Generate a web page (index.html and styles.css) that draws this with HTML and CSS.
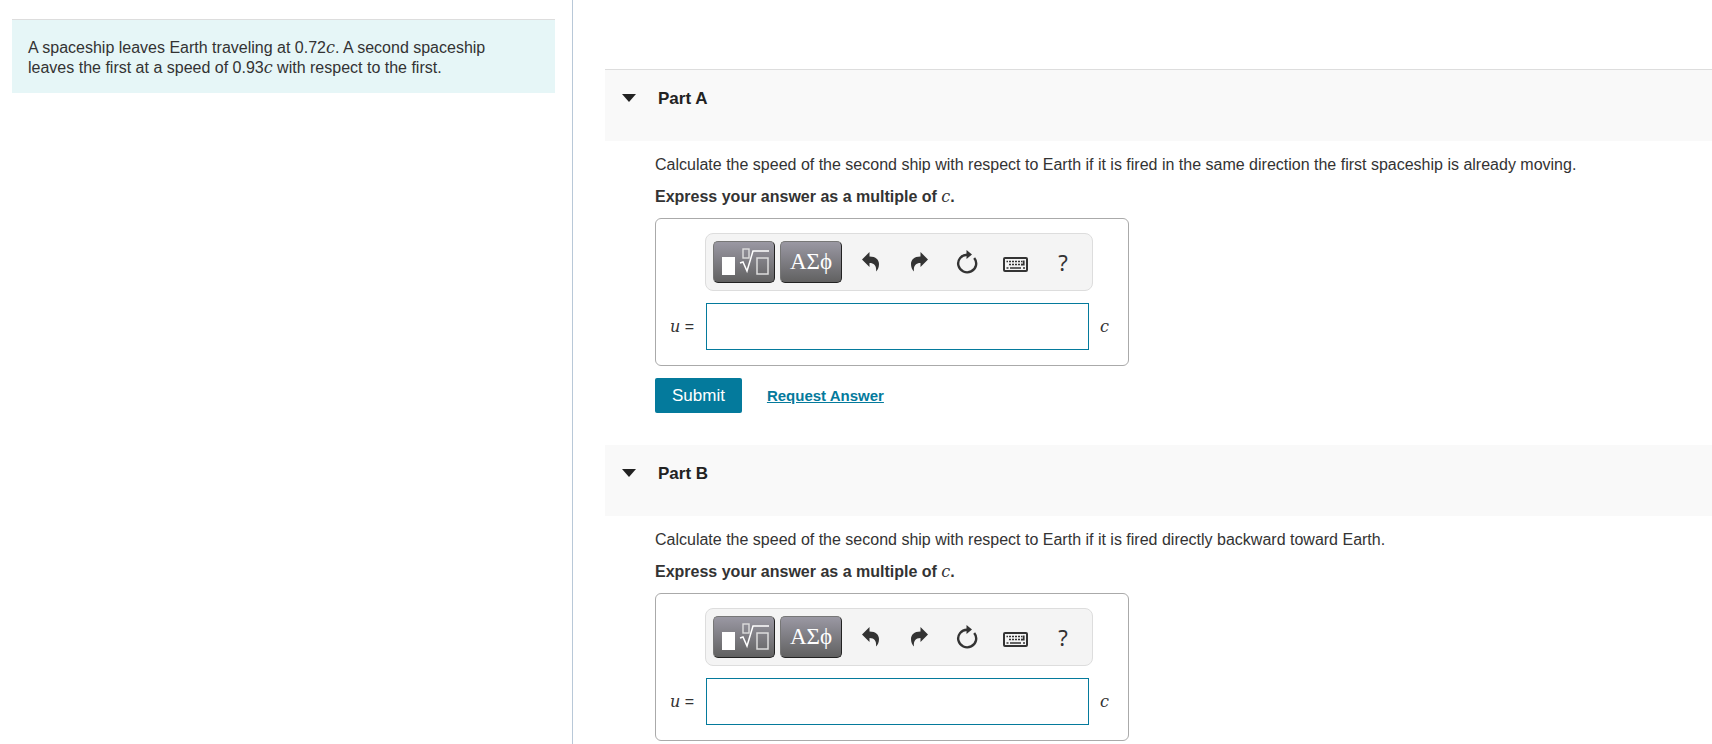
FILE: index.html
```
<!DOCTYPE html>
<html lang="en">
<head>
  <meta charset="UTF-8">
  <meta name="viewport" content="width=device-width, initial-scale=1.0">
  <title>Spaceship speeds</title>
  <link rel="stylesheet" href="styles.css">
</head>
<body>

  <!-- shared icons -->
  <svg class="icon-defs" width="0" height="0" aria-hidden="true">
    <symbol id="icon-template" viewBox="-4 0 52 28">
      <rect x="0" y="9" width="13" height="18" fill="#fff"/>
      <rect x="21" y="1" width="6" height="9" fill="none" stroke="#ddd" stroke-width="1.4"/>
      <path d="M18 15l3-1 4 9 6-20h16" fill="none" stroke="#fff" stroke-width="1.5"/>
      <rect x="35" y="10" width="11" height="16" fill="none" stroke="#ddd" stroke-width="1.5"/>
    </symbol>
    <symbol id="icon-undo" viewBox="0 0 20 20">
      <path d="M1 7.500L8.500 0V4.500C15 4.500 18 8 18 12C18 15 17 17.500 15 19.500C15.700 14 13.500 11 8.500 11V15Z" fill="#333"/>
    </symbol>
    <symbol id="icon-reset" viewBox="0 0 22 24">
      <path d="M18.200 8A9 8.800 0 1 1 11 4.700" fill="none" stroke="#333" stroke-width="2.400"/>
      <path d="M10.500 0l5.500 4.500-5.500 4.500z" fill="#333"/>
    </symbol>
    <symbol id="icon-keyboard" viewBox="0 0 25 15">
      <rect x="1" y="1" width="23" height="13" rx="1" fill="none" stroke="#333" stroke-width="2"/>
      <path d="M3.500 4.500h16M5 7.500h14M3.500 11h2M7 11h11M20 11h2" fill="none" stroke="#333" stroke-width="1.600"/>
      <path d="M5.500 3v5.800M8.500 3v5.800M11.500 3v5.800M14.500 3v5.800M17.500 3v5.800" stroke="#f4f4f4" stroke-width="1"/>
      <path d="M20.700 3.500v4.200h-2.500" fill="none" stroke="#333" stroke-width="1.800"/>
    </symbol>
  </svg>

  <div class="page">
    <aside class="problem">
      <p class="problem-text">A spaceship leaves Earth traveling at 0.72<i class="math">c</i>. A second spaceship leaves the first at a speed of 0.93<i class="math">c</i> with respect to the first.</p>
    </aside>

    <main class="parts">
      <section class="part">
        <header class="part-header">
          <button type="button" class="toggle" aria-label="Collapse Part A"></button>
          <h2>Part A</h2>
        </header>
        <form class="part-body">
          <p>Calculate the speed of the second ship with respect to Earth if it is fired in the same direction the first spaceship is already moving.</p>
          <p class="instructions">Express your answer as a multiple of <i class="math">c</i>.</p>
          <div class="answer-box">
            <div class="toolbar">
              <button type="button" class="palette-btn" aria-label="Templates"><svg width="52" height="28"><use href="#icon-template"/></svg></button>
              <button type="button" class="palette-btn">ΑΣϕ</button>
              <div class="tools">
                <button type="button" class="tool-btn" aria-label="Undo"><svg width="20" height="20"><use href="#icon-undo"/></svg></button>
                <button type="button" class="tool-btn" aria-label="Redo"><svg class="flip" width="20" height="20"><use href="#icon-undo"/></svg></button>
                <button type="button" class="tool-btn" aria-label="Reset"><svg width="22" height="24"><use href="#icon-reset"/></svg></button>
                <button type="button" class="tool-btn tool-keyboard" aria-label="Keyboard shortcuts"><svg width="25" height="15"><use href="#icon-keyboard"/></svg></button>
                <button type="button" class="tool-btn">?</button>
              </div>
            </div>
            <div class="answer-row">
              <label for="answer-a"><i class="math">u</i> =</label>
              <input type="text" id="answer-a" name="answer-a" autocomplete="off">
              <i class="math unit">c</i>
            </div>
          </div>
          <div class="actions">
            <button type="submit" class="btn-submit">Submit</button>
            <a href="#answer">Request Answer</a>
          </div>
        </form>
      </section>

      <section class="part">
        <header class="part-header">
          <button type="button" class="toggle" aria-label="Collapse Part B"></button>
          <h2>Part B</h2>
        </header>
        <form class="part-body">
          <p>Calculate the speed of the second ship with respect to Earth if it is fired directly backward toward Earth.</p>
          <p class="instructions">Express your answer as a multiple of <i class="math">c</i>.</p>
          <div class="answer-box">
            <div class="toolbar">
              <button type="button" class="palette-btn" aria-label="Templates"><svg width="52" height="28"><use href="#icon-template"/></svg></button>
              <button type="button" class="palette-btn">ΑΣϕ</button>
              <div class="tools">
                <button type="button" class="tool-btn" aria-label="Undo"><svg width="20" height="20"><use href="#icon-undo"/></svg></button>
                <button type="button" class="tool-btn" aria-label="Redo"><svg class="flip" width="20" height="20"><use href="#icon-undo"/></svg></button>
                <button type="button" class="tool-btn" aria-label="Reset"><svg width="22" height="24"><use href="#icon-reset"/></svg></button>
                <button type="button" class="tool-btn tool-keyboard" aria-label="Keyboard shortcuts"><svg width="25" height="15"><use href="#icon-keyboard"/></svg></button>
                <button type="button" class="tool-btn">?</button>
              </div>
            </div>
            <div class="answer-row">
              <label for="answer-b"><i class="math">u</i> =</label>
              <input type="text" id="answer-b" name="answer-b" autocomplete="off">
              <i class="math unit">c</i>
            </div>
          </div>
        </form>
      </section>
    </main>
  </div>

</body>
</html>
```

FILE: styles.css
```
* {
  box-sizing: border-box;
}

body {
  margin: 0;
  font-family: 'Liberation Sans', Arial, sans-serif;
  font-size: 16px;
  line-height: 20px;
  color: #333;
  background: #fff;
}

p,
h2 {
  margin: 0;
}

button {
  padding: 0;
  border: none;
  background: none;
  font-family: inherit;
  color: inherit;
  cursor: pointer;
}

.icon-defs {
  display: none;
}

.page {
  display: grid;
  grid-template-columns: 33.47% 1fr;
  min-height: 100vh;
}

.problem {
  padding: 19px 17px 0 12px;
  border-right: 1px solid #b8c8d8;
}

.problem-text {
  padding: 18px 40px 15px 16px;
  border-top: 1px solid #ddd;
  background: #e6f6f7;
}

.math {
  font-family: 'DejaVu Serif', 'Times New Roman', serif;
  font-size: 16px;
  font-weight: normal;
  line-height: 1;
}

.parts {
  padding: 69px 0 0 32px;
}

.part:first-child .part-header {
  border-top: 1px solid #ddd;
}

.part-header {
  display: flex;
  align-items: flex-start;
  gap: 22px;
  padding: 19px 0 32px 17px;
  background: #f9f9f9;
}

.part-header h2 {
  font-size: 17px;
  line-height: 20px;
  color: #222;
}

.toggle {
  margin-top: 5px;
  border-top: 8px solid #222;
  border-left: 7px solid transparent;
  border-right: 7px solid transparent;
}

.part-body {
  padding: 14px 16px 32px 50px;
}

.instructions {
  margin-top: 12px;
  font-weight: bold;
}

.answer-box {
  width: fit-content;
  margin-top: 11px;
  padding: 14px 28px 15px 14px;
  border: 1px solid #aaa;
  border-radius: 6px;
}

.toolbar {
  display: flex;
  align-items: center;
  gap: 5px;
  width: 388px;
  margin-left: 35px;
  padding: 7px 0 7px 7px;
  border: 1px solid #ddd;
  border-radius: 8px;
  background: #f4f4f4;
}

.palette-btn {
  display: flex;
  flex-shrink: 0;
  align-items: center;
  justify-content: center;
  width: 62px;
  height: 42px;
  border: 1px solid #222;
  border-top-color: #777;
  border-left-color: #777;
  border-radius: 5px;
  background: linear-gradient(#9a98a3, #616161);
  color: #fff;
  font-family: 'Liberation Serif', 'Times New Roman', serif;
  font-size: 23px;
}

.tools {
  display: flex;
}

.tool-btn {
  display: flex;
  align-items: center;
  justify-content: center;
  width: 48px;
  height: 42px;
  font-family: 'Noto Sans', sans-serif;
  font-size: 22px;
}

.tool-keyboard {
  padding-top: 5px;
}

.flip {
  transform: scaleX(-1);
}

.answer-row {
  display: flex;
  align-items: center;
  margin-top: 12px;
}

.answer-row label {
  width: 36px;
}

.answer-row input {
  width: 383px;
  height: 47px;
  padding: 0 8px;
  border: 1px solid #047a9c;
  font-size: 18px;
}

.unit {
  margin-left: 11px;
  width: 0;
}

.actions {
  display: flex;
  align-items: center;
  gap: 25px;
  margin-top: 12px;
}

.btn-submit {
  padding: 0 17px;
  height: 35px;
  border-radius: 2px;
  background: #047a9c;
  color: #fff;
  font-size: 17px;
}

.actions a {
  font-size: 15px;
  font-weight: bold;
  color: #047a9c;
}
```
